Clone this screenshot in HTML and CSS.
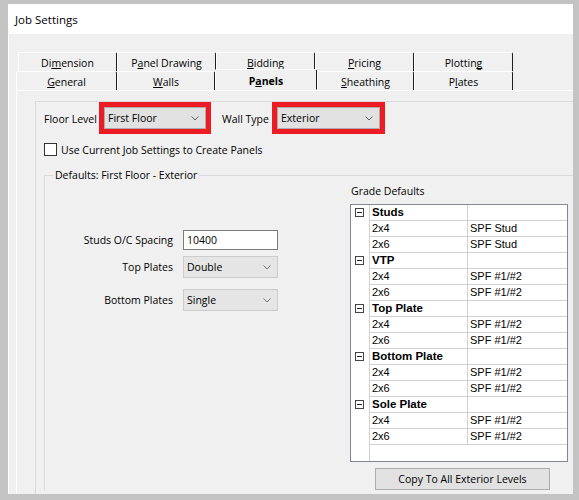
FILE: index.html
```html
<!DOCTYPE html>
<html lang="en">
<head>
    <meta charset="UTF-8">
    <title>Job Settings</title>
    <link rel="stylesheet" href="styles.css">
</head>
<body>
    <div class="frame">
        <div class="dialog">
            <!-- Title Bar -->
            <div class="titlebar">Job Settings</div>

            <!-- Tab Strip -->
            <div class="tabs">
                <div class="tab-row back">
                    <div class="tab" style="width: 99px">Di<u>m</u>ension</div>
                    <div class="tab" style="width: 99px">P<u>a</u>nel Drawing</div>
                    <div class="tab" style="width: 99px"><u>B</u>idding</div>
                    <div class="tab" style="width: 99px"><u>P</u>ricing</div>
                    <div class="tab" style="width: 99px">Plottin<u>g</u></div>
                </div>
                <div class="tab-row front">
                    <div class="tab" style="width: 101px"><u>G</u>eneral</div>
                    <div class="tab" style="width: 98px"><u>W</u>alls</div>
                    <div class="tab active" style="width: 102px">P<u>a</u>nels</div>
                    <div class="tab" style="width: 97px"><u>S</u>heathing</div>
                    <div class="tab" style="width: 99px">P<u>l</u>ates</div>
                </div>
            </div>

            <!-- Panels Page -->
            <div class="tab-page">
                <div class="panel">
                    <div class="level-row">
                        <span class="lbl floor-lbl">Floor Level</span>
                        <div class="mark floor-mark">
                            <div class="combo">
                                <span>First Floor</span>
                                <svg width="8" height="5" viewBox="0 0 8 5"><path d="M0.5 0.5 L4 4 L7.5 0.5" fill="none" stroke="#606060"/></svg>
                            </div>
                        </div>
                        <span class="lbl wall-lbl">Wall Type</span>
                        <div class="mark wall-mark">
                            <div class="combo">
                                <span>Exterior</span>
                                <svg width="8" height="5" viewBox="0 0 8 5"><path d="M0.5 0.5 L4 4 L7.5 0.5" fill="none" stroke="#606060"/></svg>
                            </div>
                        </div>
                    </div>

                    <div class="check-row">
                        <span class="checkbox"></span>
                        <span>Use Current Job Settings to Create Panels</span>
                    </div>

                    <fieldset class="group">
                        <legend>Defaults: First Floor - Exterior</legend>
                        <div class="group-body">
                            <div class="form">
                                <div class="form-row">
                                    <span class="form-lbl">Studs O/C Spacing</span>
                                    <div class="textbox">10400</div>
                                </div>
                                <div class="form-row gap-sm">
                                    <span class="form-lbl">Top Plates</span>
                                    <div class="combo flat">
                                        <span>Double</span>
                                        <svg width="8" height="5" viewBox="0 0 8 5"><path d="M0.5 0.5 L4 4 L7.5 0.5" fill="none" stroke="#707070"/></svg>
                                    </div>
                                </div>
                                <div class="form-row gap-lg">
                                    <span class="form-lbl">Bottom Plates</span>
                                    <div class="combo flat">
                                        <span>Single</span>
                                        <svg width="8" height="5" viewBox="0 0 8 5"><path d="M0.5 0.5 L4 4 L7.5 0.5" fill="none" stroke="#707070"/></svg>
                                    </div>
                                </div>
                            </div>

                            <div class="grades">
                                <div class="grades-title">Grade Defaults</div>
                                <div class="grid">
                                    <div class="row head"><span class="g"><span class="exp"></span></span><span class="c1">Studs</span><span class="c2"></span></div>
                                    <div class="row"><span class="g"></span><span class="c1">2x4</span><span class="c2">SPF Stud</span></div>
                                    <div class="row"><span class="g"></span><span class="c1">2x6</span><span class="c2">SPF Stud</span></div>
                                    <div class="row head"><span class="g"><span class="exp"></span></span><span class="c1">VTP</span><span class="c2"></span></div>
                                    <div class="row"><span class="g"></span><span class="c1">2x4</span><span class="c2">SPF #1/#2</span></div>
                                    <div class="row"><span class="g"></span><span class="c1">2x6</span><span class="c2">SPF #1/#2</span></div>
                                    <div class="row head"><span class="g"><span class="exp"></span></span><span class="c1">Top Plate</span><span class="c2"></span></div>
                                    <div class="row"><span class="g"></span><span class="c1">2x4</span><span class="c2">SPF #1/#2</span></div>
                                    <div class="row"><span class="g"></span><span class="c1">2x6</span><span class="c2">SPF #1/#2</span></div>
                                    <div class="row head"><span class="g"><span class="exp"></span></span><span class="c1">Bottom Plate</span><span class="c2"></span></div>
                                    <div class="row"><span class="g"></span><span class="c1">2x4</span><span class="c2">SPF #1/#2</span></div>
                                    <div class="row"><span class="g"></span><span class="c1">2x6</span><span class="c2">SPF #1/#2</span></div>
                                    <div class="row head"><span class="g"><span class="exp"></span></span><span class="c1">Sole Plate</span><span class="c2"></span></div>
                                    <div class="row"><span class="g"></span><span class="c1">2x4</span><span class="c2">SPF #1/#2</span></div>
                                    <div class="row"><span class="g"></span><span class="c1">2x6</span><span class="c2">SPF #1/#2</span></div>
                                </div>
                                <button class="copy-btn">Copy To All Exterior Levels</button>
                            </div>
                        </div>
                    </fieldset>
                </div>
            </div>
        </div>
    </div>
</body>
</html>
```

FILE: styles.css
```css
/* General */
body {
    margin: 0;
    background: #c3c3c3;
    font-family: 'Open Sans', Roboto, sans-serif;
    font-size: 10.5px;
    color: #000;
}

.frame {
    padding: 4px 6px 0 8px;
    height: 500px;
    box-sizing: border-box;
}

.dialog {
    width: 565px;
    height: 490px;
    background: #f0f0f0;
    border-left: 1px solid #fff;
    box-sizing: border-box;
    overflow: hidden;
}

/* Title Bar */
.titlebar {
    height: 30px;
    line-height: 31px;
    background: #fff;
    padding-left: 6px;
    font-size: 11.5px;
}

/* Tabs */
.tabs {
    margin-top: 18px;
    padding-left: 7px;
}

.tab-row {
    display: flex;
    height: 19px;
}

.tab-row.back {
    padding-left: 2px;
}

.tab {
    box-sizing: border-box;
    height: 19px;
    padding-top: 2px;
    line-height: 17px;
    text-align: center;
    border-top: 1px solid #fff;
    border-left: 1px solid #fff;
    border-right: 1px solid #1e1e1e;
    border-top-left-radius: 2px;
    border-top-right-radius: 2px;
}

.tab u {
    text-underline-offset: 1px;
    text-decoration-skip-ink: none;
}

.tab.active {
    font-weight: bold;
    margin-top: -2px;
    height: 21px;
    padding-top: 3px;
    position: relative;
    background: #f0f0f0;
    border-bottom: 1px solid #f0f0f0;
    margin-bottom: -1px;
}

/* Tab Page */
.tab-page {
    margin-left: 7px;
    padding: 10px 0 0 18px;
    border-top: 1px solid #fff;
    border-left: 1px solid #fff;
    height: 420px;
}

.panel {
    border-top: 1px solid #dadada;
    border-left: 1px solid #dadada;
    padding-left: 8px;
    height: 420px;
}

.level-row {
    display: flex;
    align-items: center;
    height: 32px;
}

.lbl {
    padding-top: 1px;
}

.floor-lbl {
    width: 55px;
}

.wall-lbl {
    width: 50px;
    margin-left: 11px;
}

.mark {
    box-sizing: border-box;
    height: 32px;
    border: 5px solid #ed1c24;
}

.floor-mark {
    width: 112px;
}

.wall-mark {
    width: 113px;
}

.combo {
    box-sizing: border-box;
    height: 22px;
    display: flex;
    align-items: center;
    justify-content: space-between;
    padding: 0 6px 0 3px;
    background: #e1e1e1;
    border: 1px solid #adadad;
}

.combo.flat {
    background: #e5e5e5;
    border-color: #cccccc;
}

.check-row {
    display: flex;
    align-items: center;
    gap: 4px;
    height: 13px;
    margin-top: 9px;
}

.checkbox {
    box-sizing: border-box;
    width: 13px;
    height: 13px;
    border: 1px solid #333;
    background: #fff;
}

/* Group Box */
.group {
    margin: 12px 0 0;
    padding: 0;
    min-width: 0;
    border: 1px solid #dadada;
    border-right: none;
    border-bottom: none;
}

.group legend {
    margin-left: 8px;
    padding: 0 2px;
    line-height: 14px;
}

.group-body {
    display: flex;
}

.form {
    width: 305px;
    padding-top: 48px;
}

.form-row {
    display: grid;
    grid-template-columns: 128px 95px;
    column-gap: 10px;
    align-items: center;
}

.form-row.gap-sm {
    margin-top: 6px;
}

.form-row.gap-lg {
    margin-top: 11px;
}

.form-lbl {
    text-align: right;
}

.textbox {
    box-sizing: border-box;
    height: 20px;
    line-height: 18px;
    padding-left: 3px;
    background: #fff;
    border: 1px solid #7a7a7a;
}

/* Grade Defaults */
.grades {
    width: 218px;
}

.grades-title {
    margin-top: 2px;
    line-height: 14px;
    padding-left: 1px;
}

.grid {
    box-sizing: border-box;
    height: 258px;
    margin-top: 6px;
    border: 1px solid #828790;
    background: #fff linear-gradient(to right, transparent 18px, #d0d0d0 18px, #d0d0d0 19px, transparent 19px);
    font-family: 'Liberation Sans', Arial, sans-serif;
    font-size: 11px;
}

.row {
    display: flex;
    height: 16px;
}

.row span {
    box-sizing: border-box;
    line-height: 15px;
}

.row .g {
    width: 18px;
    position: relative;
}

.row .c1,
.row .c2 {
    padding-left: 2px;
    border-left: 1px solid #d0d0d0;
    border-bottom: 1px solid #d0d0d0;
}

.row .c1 {
    width: 98px;
}

.row .c2 {
    flex: 1;
}

.row.head .c1 {
    font-weight: bold;
    font-size: 11.5px;
}

.exp {
    position: absolute;
    left: 4px;
    top: 3px;
    width: 9px;
    height: 9px;
    box-sizing: border-box;
    border: 1px solid #444;
}

.exp::after {
    content: "";
    position: absolute;
    left: 1px;
    top: 3px;
    width: 5px;
    height: 1px;
    background: #222;
}

.copy-btn {
    display: block;
    width: 175px;
    height: 22px;
    margin: 6px 0 0 25px;
    padding: 0;
    font-family: 'Open Sans', Roboto, sans-serif;
    font-size: 10.5px;
    color: #000;
    background: #e1e1e1;
    border: 1px solid #adadad;
}
```
